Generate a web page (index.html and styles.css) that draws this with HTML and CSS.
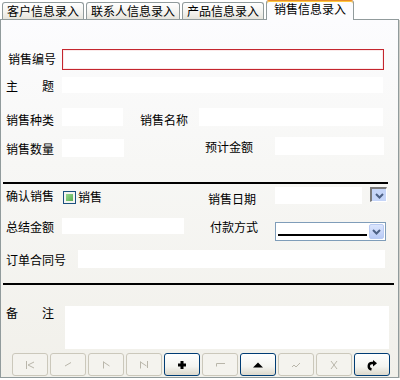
FILE: index.html
```html
<!DOCTYPE html>
<html lang="zh-CN">
<head>
<meta charset="UTF-8">
<title>销售信息录入</title>
<link rel="stylesheet" href="styles.css">
</head>
<body>
<div class="tabs">
  <div class="tab">客户信息录入</div>
  <div class="tab">联系人信息录入</div>
  <div class="tab">产品信息录入</div>
  <div class="tab active">销售信息录入</div>
</div>
<div class="panel">
  <div class="row r1"><span class="lbl w54">销售编号</span><div class="fld req"></div></div>
  <div class="row r2"><span class="lbl spread"><span>主</span><span>题</span></span><div class="fld subj"></div></div>
  <div class="row r3">
    <span class="lbl w56 low">销售种类</span><div class="fld kind"></div>
    <span class="lbl name low">销售名称</span><div class="fld pname"></div>
  </div>
  <div class="row r4">
    <span class="lbl w56 low">销售数量</span><div class="fld qty"></div>
    <span class="lbl est">预计金额</span><div class="fld amount"></div>
  </div>
  <div class="sep s1"></div>
  <div class="row r5">
    <span class="lbl w56 mt2">确认销售</span>
    <div class="chkgrp"><span class="chk"><i></i></span><span class="lbl">销售</span></div>
    <span class="lbl date low">销售日期</span><div class="fld dval"></div>
    <div class="dd"><svg width="11" height="9" viewBox="0 0 11 9"><polyline points="2,3 5.5,6.5 9,3" fill="none" stroke="#4d6185" stroke-width="2"/></svg></div>
  </div>
  <div class="row r6">
    <span class="lbl w56 mt2">总结金额</span><div class="fld total"></div>
    <span class="lbl pay mt2">付款方式</span>
    <div class="sel"><div class="sel-val"></div><div class="sel-btn"><svg width="11" height="9" viewBox="0 0 11 9"><polyline points="2,3 5.5,6.5 9,3" fill="none" stroke="#4d6185" stroke-width="2"/></svg></div></div>
  </div>
  <div class="row r7"><span class="lbl w72 mt3">订单合同号</span><div class="fld contract"></div></div>
  <div class="sep s2"></div>
  <div class="row r8"><span class="lbl spread note"><span>备</span><span>注</span></span><div class="fld memo"></div></div>
  <div class="btns">
    <div class="btn"><svg width="12" height="12" viewBox="0 0 12 12"><path d="M2.5 2v8M10 3L4 6l6 3" fill="none" stroke="#b9b6aa"/></svg></div>
    <div class="btn"><svg width="12" height="12" viewBox="0 0 12 12"><path d="M9 3.5L3 7" fill="none" stroke="#b9b6aa"/></svg></div>
    <div class="btn"><svg width="12" height="12" viewBox="0 0 12 12"><path d="M3.5 2.5v7M3.5 3l6 4" fill="none" stroke="#b9b6aa"/></svg></div>
    <div class="btn"><svg width="12" height="12" viewBox="0 0 12 12"><path d="M2.5 2.5v7M2.5 3l6 4M9.5 2v7" fill="none" stroke="#b9b6aa"/></svg></div>
    <div class="btn on"><svg width="12" height="12" viewBox="0 0 12 12"><path d="M6 2v8M2 6h8" fill="none" stroke="#000" stroke-width="3"/></svg></div>
    <div class="btn"><svg width="12" height="12" viewBox="0 0 12 12"><path d="M11 4.5H2.5v3" fill="none" stroke="#b9b6aa"/></svg></div>
    <div class="btn on"><svg width="12" height="12" viewBox="0 0 12 12"><polygon points="1,8.5 6,3.5 11,8.5" fill="#000"/></svg></div>
    <div class="btn"><svg width="12" height="12" viewBox="0 0 12 12"><path d="M2 8l2-2 2 2 4-4" fill="none" stroke="#b9b6aa"/></svg></div>
    <div class="btn"><svg width="12" height="12" viewBox="0 0 12 12"><path d="M3 2l6 8M9 2l-6 8" fill="none" stroke="#b9b6aa"/></svg></div>
    <div class="btn on"><svg width="12" height="12" viewBox="0 0 12 12"><path d="M5.5 10.5C1.5 9.5 2 4 6 4h1.5" fill="none" stroke="#000" stroke-width="2.4"/><polygon points="7,1 11,4.2 7,7.4" fill="#000"/></svg></div>
  </div>
</div>
</body>
</html>
```
FILE: styles.css
```css
*{margin:0;padding:0;box-sizing:border-box;}
body{font-family:"Noto Sans CJK SC","Noto Sans",sans-serif;font-size:12px;color:#000;background:#fff;}
.tabs{display:flex;align-items:flex-end;height:19px;padding-left:2px;gap:2px;}
.tab{height:17px;padding:0 4px;border:1px solid #919b9c;border-bottom:none;border-radius:3px 3px 0 0;background:linear-gradient(#fff,#f3f2ee 60%,#e6e4dc);line-height:15px;white-space:nowrap;}
.tab.active{position:relative;z-index:1;height:20px;margin-bottom:-1px;padding:0 7px;background:#fcfcfe;border-top:1px solid #e68b2c;box-shadow:inset 0 1px 0 #ffc83c;line-height:16px;}
.panel{width:399px;height:359px;border:1px solid #919b9c;background:linear-gradient(#fcfcfe,#f7f7f5 40%,#f1f0ea);box-shadow:1px 1px 0 #d0cfc8;}
.row{display:flex;align-items:flex-start;padding-left:5px;}
.lbl{line-height:14px;white-space:nowrap;}
.fld{background:#fff;}
.w54{width:54px;margin-top:3px;}
.w56{width:56px;}
.w72{width:72px;}
.low{margin-top:5px;}
.mt2{margin-top:2px;}
.mt3{margin-top:3px;}
.spread{display:flex;justify-content:space-between;width:48px;margin-right:8px;}
.r1{margin-top:29px;padding-left:7px;}
.req{width:322px;height:21px;border:1px solid #c4262e;box-shadow:inset 0 0 0 1px #fbeaea;}
.r2{margin-top:7px;}
.r2 .spread{margin-top:2px;}
.subj{width:321px;height:16px;}
.r3{margin-top:15px;}
.kind{width:61px;height:18px;}
.name{width:59px;margin-left:17px;}
.pname{width:184px;height:18px;}
.r4{margin-top:10px;}
.qty{width:62px;height:18px;margin-top:2px;}
.est{width:70px;margin-left:81px;margin-top:3px;}
.amount{width:109px;height:18px;}
.sep{height:2px;background:#000;margin-left:2px;}
.s1{width:385px;margin-top:25px;}
.s2{width:391px;margin-top:15px;}
.r5{margin-top:3px;}
.chkgrp{display:flex;align-items:flex-start;width:146px;padding-left:1px;}
.chk{width:13px;height:13px;margin-top:4px;margin-right:2px;border:1px solid #1c5180;background:#f4f4f0;padding:2px;}
.chk i{display:block;width:7px;height:7px;background:linear-gradient(135deg,#98d890,#5aad52);}
.chkgrp .lbl{margin-top:3px;}
.date{width:67px;}
.dval{width:87px;height:17px;}
.dd{width:17px;height:15px;margin-left:8px;border:1px solid;border-color:#7a7a7a #fff #fff #7a7a7a;border-width:2px 1px 1px 2px;background:#c5d5f8;display:flex;align-items:center;justify-content:center;}
.r6{margin-top:12px;}
.total{width:122px;height:16px;}
.pay{width:65px;margin-left:26px;}
.sel{display:flex;align-items:flex-start;width:111px;height:19px;margin-top:4px;border:1px solid #7f9db9;background:#fff;}
.sel-val{width:89px;height:2px;margin:11px 0 0 2px;background:#000;}
.sel-btn{width:15px;height:15px;margin:1px 1px 0 auto;border:1px solid #b9cbf3;border-radius:2px;background:linear-gradient(#dce6fd,#b8caf6);display:flex;align-items:center;justify-content:center;}
.r7{margin-top:9px;}
.contract{width:307px;height:18px;}
.r8{margin-top:21px;}
.note{margin-right:11px;}
.memo{width:324px;height:43px;}
.btns{display:flex;gap:2px;margin-top:4px;padding-left:11px;}
.btn{width:36px;height:23px;border:1px solid #cbc8bb;border-radius:3px;background:#f4f3ee;display:flex;align-items:center;justify-content:center;}
.btn.on{border-color:#003c74;background:linear-gradient(#fff,#f4f4f0 60%,#dcd8cc);}
```
